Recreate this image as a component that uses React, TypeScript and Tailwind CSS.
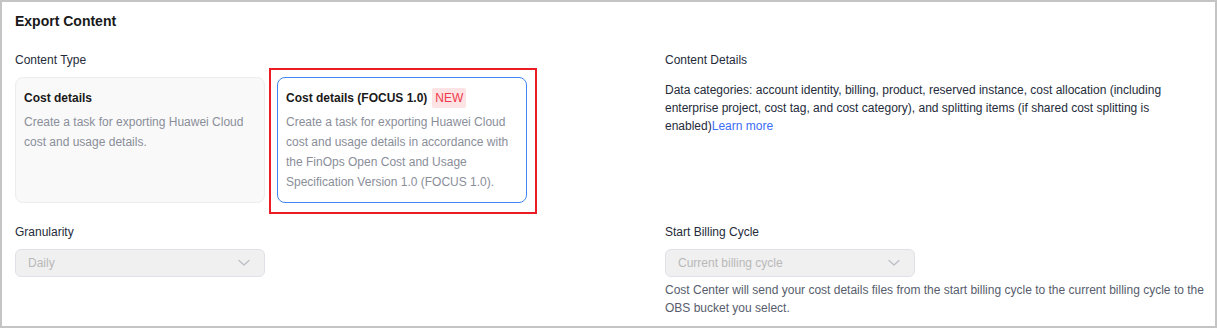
import React from "react";

const Chevron = () => (
  <svg width="12" height="8" viewBox="0 0 12 8" fill="none">
    <polyline points="1,1.5 6,6 11,1.5" stroke="#b8bcc4" strokeWidth="1.2" strokeLinejoin="round" strokeLinecap="round" />
  </svg>
);

const Select = ({ value }: { value: string }) => (
  <div className="flex h-[28px] w-[250px] items-center justify-between rounded-[6px] border border-[#dfe1e6] bg-[#f0f0f0] pl-[12px] pr-[14px]">
    <span className="text-[12px] leading-[18px] text-[#b9b9b9]">{value}</span>
    <Chevron />
  </div>
);

export default function App() {
  return (
    <div
      className="h-[328px] w-[1217px] border-2 border-[#c4c4c4] bg-white pl-[13px] pr-[10px] pt-[9px]"
      style={{ fontFamily: '"Liberation Sans", Arial, sans-serif' }}
    >
      <div className="text-[14px] font-bold leading-[20px] text-[#191919]">Export Content</div>
      <div className="mt-[20px] grid grid-cols-[650px_1fr] gap-y-[20px]">
        {/* Content Type */}
        <div>
          <div className="text-[12px] leading-[18px] text-[#252b3a]">Content Type</div>
          <div className="mt-[8px] flex gap-[12px]">
            <div className="h-[126px] w-[250px] rounded-[8px] border border-[#ececec] bg-[#f9f9f9] px-[8px] pt-[10px]">
              <div className="flex h-[20px] items-center text-[12px] font-bold text-[#191919]">Cost details</div>
              <div className="mt-[4px] text-[12px] leading-[20px] text-[#8a8e99]">
                Create a task for exporting Huawei Cloud cost and usage details.
              </div>
            </div>
            <div className="relative h-[126px] w-[250px] rounded-[8px] border border-[#3f86f4] bg-white px-[8px] pt-[10px]">
              <div className="pointer-events-none absolute left-[-9px] top-[-10px] h-[146px] w-[268px] border-2 border-[#ea1c24]" />
              <div className="flex h-[20px] items-center gap-[5px] text-[12px] font-bold text-[#191919]">
                <span>Cost details (FOCUS 1.0)</span>
                <span className="flex h-[20px] items-center rounded-[2px] bg-[#fde3e3] px-[3px] text-[12px] font-normal text-[#f0394a]">NEW</span>
              </div>
              <div className="mt-[4px] text-[12px] leading-[20px] text-[#8a8e99]">
                Create a task for exporting Huawei Cloud cost and usage details in accordance with the FinOps Open Cost and Usage Specification Version 1.0 (FOCUS 1.0).
              </div>
            </div>
          </div>
        </div>
        {/* Content Details */}
        <div>
          <div className="text-[12px] leading-[18px] text-[#252b3a]">Content Details</div>
          <p className="mt-[12px] text-[12px] leading-[18px] text-[#252b3a]">
            Data categories: account identity, billing, product, reserved instance, cost allocation (including enterprise project, cost tag, and cost category), and splitting items (if shared cost splitting is enabled)<a className="text-[#3b6ef6]">Learn more</a>
          </p>
        </div>
        {/* Granularity */}
        <div>
          <div className="text-[12px] leading-[18px] text-[#252b3a]">Granularity</div>
          <div className="mt-[8px]">
            <Select value="Daily" />
          </div>
        </div>
        {/* Start Billing Cycle */}
        <div>
          <div className="text-[12px] leading-[18px] text-[#252b3a]">Start Billing Cycle</div>
          <div className="mt-[8px]">
            <Select value="Current billing cycle" />
          </div>
          <div className="mt-[4px] text-[12px] leading-[18px] text-[#575d6c]">
            Cost Center will send your cost details files from the start billing cycle to the current billing cycle to the OBS bucket you select.
          </div>
        </div>
      </div>
    </div>
  );
}
